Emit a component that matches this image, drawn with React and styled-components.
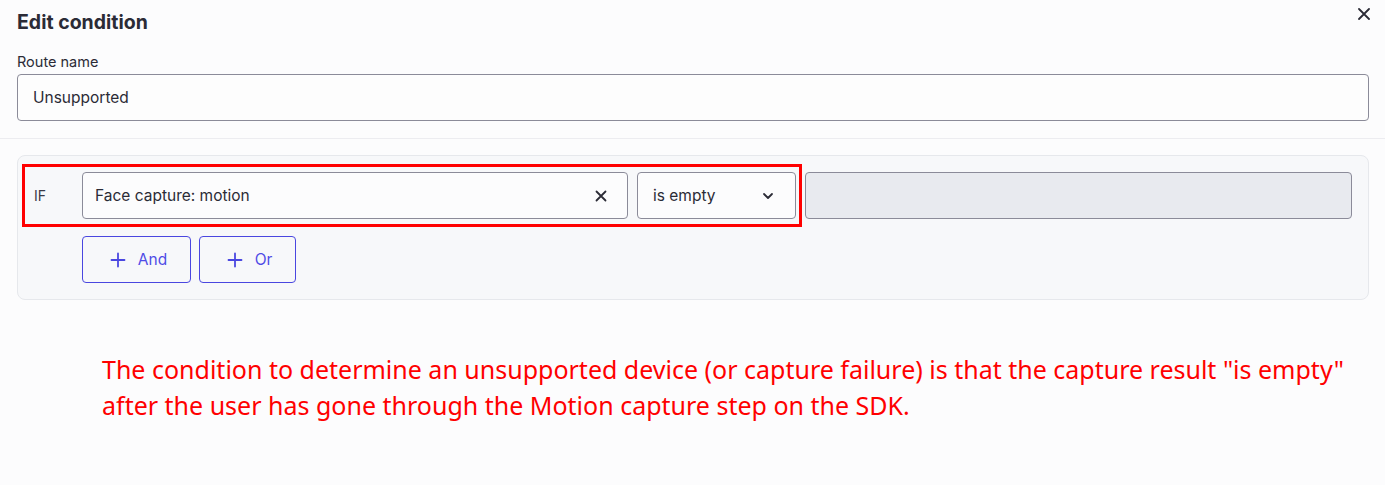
import styled, { createGlobalStyle } from 'styled-components';

const GlobalStyle = createGlobalStyle`
  html, body {
    margin: 0;
    padding: 0;
    background: #fcfcfd;
    font-family: Inter, "Open Sans", sans-serif;
    color: #2b2b36;
  }
`;

const App = () => {
  return (
    <>
      <GlobalStyle />
      <Page>
        <Header>
          <Title>Edit condition</Title>
          <CloseButton aria-label="Close">
            <svg width="12" height="12" viewBox="0 0 12 12">
              <path d="M1 1L11 11M11 1L1 11" stroke="#2b2b36" strokeWidth="1.8" strokeLinecap="round" />
            </svg>
          </CloseButton>
          <Label>Route name</Label>
          <TextInput>Unsupported</TextInput>
        </Header>

        <Panel>
          <ConditionRow>
            <IfLabel>IF</IfLabel>
            <Field>
              <span>Face capture: motion</span>
              <svg width="12" height="12" viewBox="0 0 12 12">
                <path d="M1.5 1.5L10.5 10.5M10.5 1.5L1.5 10.5" stroke="#2b2b36" strokeWidth="1.8" strokeLinecap="round" />
              </svg>
            </Field>
            <Select>
              <span>is empty</span>
              <svg width="12" height="8" viewBox="0 0 12 8">
                <path d="M2 2L6 6L10 2" stroke="#2b2b36" strokeWidth="1.8" fill="none" strokeLinecap="round" strokeLinejoin="round" />
              </svg>
            </Select>
            <ValueInput />
            <Highlight />
          </ConditionRow>
          <Actions>
            <AddButton $width={109}>
              <Plus />
              And
            </AddButton>
            <AddButton $width={97}>
              <Plus />
              Or
            </AddButton>
          </Actions>
        </Panel>

        <Note>
          The condition to determine an unsupported device (or capture failure) is that the capture result "is empty"
          <br />
          after the user has gone through the Motion capture step on the SDK.
        </Note>
      </Page>
    </>
  );
};

const Plus = () => (
  <svg width="16" height="16" viewBox="0 0 16 16">
    <path d="M8 1.5V14.5M1.5 8H14.5" stroke="#4a47e0" strokeWidth="1.8" strokeLinecap="round" />
  </svg>
);

export default App;

const Page = styled.div`
  width: 1385px;
  height: 485px;
  overflow: hidden;
`;

const Header = styled.div`
  position: relative;
  padding: 9px 16px 17px 17px;
  border-bottom: 1px solid #ececf0;
`;

const Title = styled.h1`
  margin: 0 0 17px;
  font-size: 19.5px;
  line-height: 26px;
  font-weight: 700;
  color: #2b2b36;
`;

const CloseButton = styled.button`
  position: absolute;
  top: 8px;
  right: 15px;
  width: 12px;
  height: 12px;
  padding: 0;
  border: none;
  background: transparent;
  display: flex;
  cursor: pointer;
`;

const Label = styled.div`
  font-size: 14.5px;
  line-height: 20px;
  margin-bottom: 2px;
`;

const TextInput = styled.div`
  height: 45px;
  border: 1px solid #8b8b99;
  border-radius: 4px;
  background: #fdfdfd;
  padding: 0 15px;
  display: flex;
  align-items: center;
  font-size: 15.5px;
`;

const Panel = styled.div`
  margin: 16px 16px 0 17px;
  background: #f7f8fa;
  border: 1px solid #e6e8ec;
  border-radius: 8px;
  padding: 16px 16px 16px 0;
`;

const ConditionRow = styled.div`
  position: relative;
  display: flex;
  align-items: center;
  gap: 9px;
`;

const IfLabel = styled.div`
  width: 55px;
  padding-left: 16px;
  box-sizing: border-box;
  font-size: 14px;
  color: #3a3a46;
`;

const Box = styled.div`
  height: 45px;
  border: 1px solid #8b8b99;
  border-radius: 4px;
  display: flex;
  align-items: center;
  justify-content: space-between;
  box-sizing: content-box;
  font-size: 15.5px;
`;

const Field = styled(Box)`
  width: 512px;
  padding: 0 20px 0 12px;
  background: #fcfcfd;
`;

const Select = styled(Box)`
  width: 121px;
  padding: 0 21px 0 15px;
  background: #fcfcfd;
`;

const ValueInput = styled(Box)`
  flex: 1;
  background: #e8eaef;
`;

const Highlight = styled.div`
  position: absolute;
  left: 4px;
  top: -8px;
  width: 780px;
  height: 63px;
  box-sizing: border-box;
  border: 3px solid #ff0000;
  pointer-events: none;
`;

const Actions = styled.div`
  display: flex;
  gap: 8px;
  margin: 17px 0 0 64px;
`;

const AddButton = styled.button`
  width: ${(p) => p.$width}px;
  height: 47px;
  border: 1px solid #4a47e0;
  border-radius: 4px;
  background: transparent;
  display: flex;
  align-items: center;
  justify-content: center;
  gap: 12px;
  padding: 0 0 0 4px;
  font-family: Inter, "Open Sans", sans-serif;
  font-size: 15.5px;
  color: #4f4ce6;
  cursor: pointer;
`;

const Note = styled.p`
  margin: 51px 0 0 102px;
  font-family: "Noto Sans", sans-serif;
  font-size: 25px;
  line-height: 36px;
  color: #ff0000;
`;
